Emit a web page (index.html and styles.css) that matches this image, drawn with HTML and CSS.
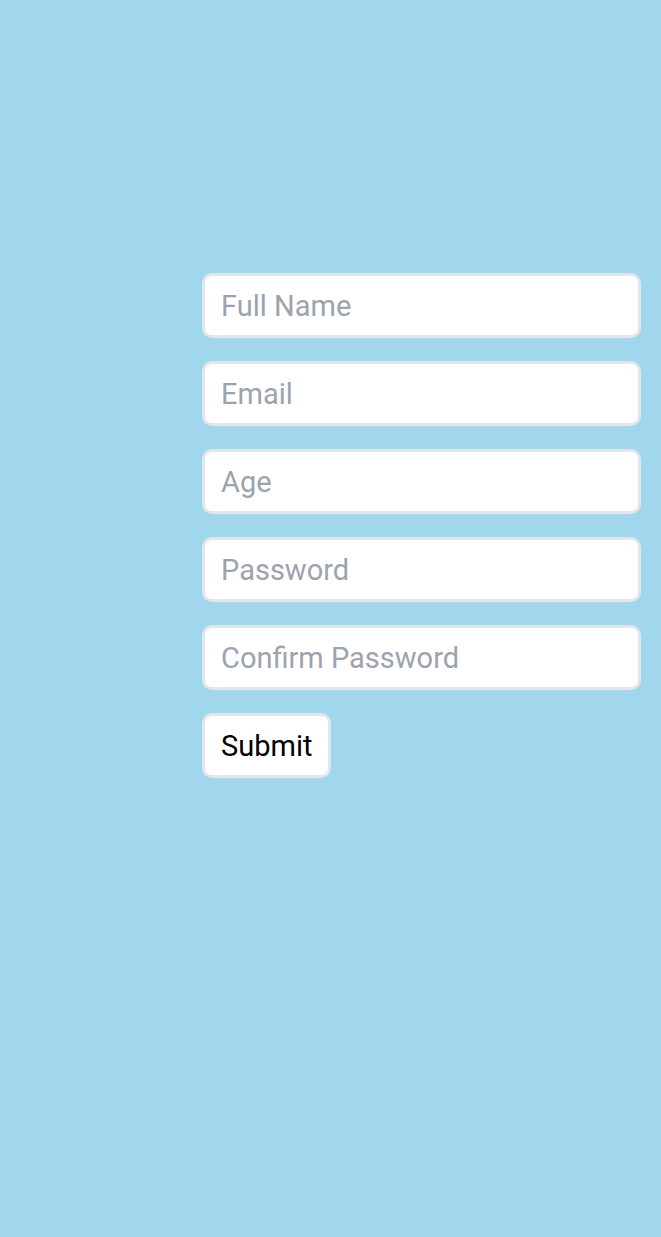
FILE: index.html
```html
<!DOCTYPE html>
<html>
<head>
<meta charset="utf-8">
<link rel="stylesheet" href="styles.css">
</head>
<body>
<main class="page">
  <form class="form">
    <input class="field" type="text" placeholder="Full Name">
    <input class="field" type="email" placeholder="Email">
    <input class="field" type="text" placeholder="Age">
    <input class="field" type="password" placeholder="Password">
    <input class="field" type="password" placeholder="Confirm Password">
    <div class="actions"><button class="submit" type="button">Submit</button></div>
  </form>
</main>
</body>
</html>
```
FILE: styles.css
```css
html, body {
  margin: 0;
  padding: 0;
  background: #a1d7ec;
}
.page {
  min-height: 1237px;
  display: flex;
  align-items: flex-start;
  justify-content: flex-end;
  padding: 273px 20px 0 0;
  box-sizing: border-box;
}
.form {
  width: 439px;
  display: flex;
  flex-direction: column;
  gap: 23px;
  font-family: Roboto, "Noto Sans", sans-serif;
}
.field {
  box-sizing: border-box;
  height: 65px;
  width: 100%;
  border: 3px solid #e3e6ea;
  border-radius: 10px;
  background: #fff;
  padding: 0 16px;
  font-family: inherit;
  font-size: 29px;
  color: #111;
  outline: none;
}
.field::placeholder {
  color: #9ca3af;
}
.actions {
  display: flex;
}
.submit {
  box-sizing: border-box;
  height: 65px;
  padding: 0 16px;
  border: 3px solid #e3e6ea;
  border-radius: 10px;
  background: #fff;
  font-family: inherit;
  font-size: 29px;
  color: #000;
}
```
